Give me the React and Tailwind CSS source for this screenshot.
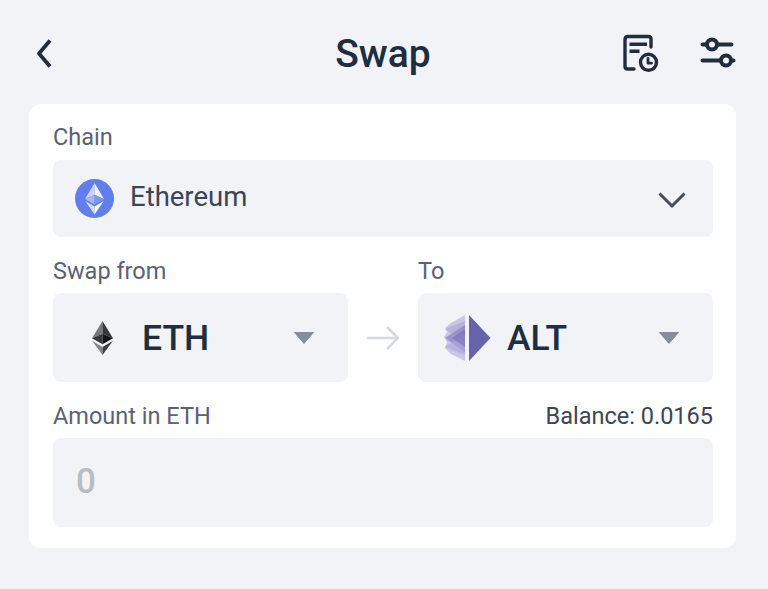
function BackIcon() {
  return (
    <svg className="h-8 w-5" viewBox="0 0 20 32" fill="none" stroke="#202d3f" strokeWidth="3.8">
      <path d="M16 3.500 L5 16.500 L16 29.500" strokeLinejoin="round" />
    </svg>
  );
}

function HistoryIcon() {
  return (
    <svg className="h-10 w-10" viewBox="0 0 40 40" fill="none" stroke="#202d3f" strokeWidth="3.4" strokeLinecap="round" strokeLinejoin="round">
      <path d="M31 14V6Q31 3.500 28.500 3.500H8Q5 3.500 5 6.500V33.500Q5 36 8 36H14" />
      <path d="M9.500 11.300H27M9.500 18.300H19.500" strokeLinecap="butt" />
      <circle cx="28.500" cy="29.300" r="8" />
      <path d="M28 25.500V30.200H31.500" strokeWidth="2.800" />
    </svg>
  );
}

function SettingsIcon() {
  return (
    <svg className="h-8 w-9" viewBox="0 0 36 32" fill="none" stroke="#202d3f" strokeWidth="4">
      <path d="M2.500 7.500H7M17.500 7.500H31.500M2.500 23.500H20M31 23.500H33.500" strokeLinecap="round" />
      <circle cx="12" cy="7.500" r="5" />
      <circle cx="26" cy="23.500" r="5" />
    </svg>
  );
}

function EthereumBadge() {
  return (
    <svg className="size-10" viewBox="0 0 40 40">
      <circle cx="20.500" cy="19.500" r="19.500" fill="#627eea" />
      <path d="M20.500 4L11 20L20.500 15.700Z" fill="#c9d2f9" />
      <path d="M20.500 4L30 20L20.500 15.700Z" fill="#eef1fe" />
      <path d="M11 20L20.500 15.700V25.500Z" fill="#a6b5f4" />
      <path d="M30 20L20.500 15.700V25.500Z" fill="#8296ee" />
      <path d="M11.300 22L20.500 27.500V35.500Z" fill="#d5dcfb" />
      <path d="M29.700 22L20.500 27.500V35.500Z" fill="#f3f5fe" />
    </svg>
  );
}

function EthMark() {
  return (
    <svg className="h-[34px] w-[22px]" viewBox="0 0 22 34">
      <path d="M11.500 0L1 17.200L11.500 12.700Z" fill="#77777c" />
      <path d="M11.500 0L22 17.200L11.500 12.700Z" fill="#38383c" />
      <path d="M1 17.200L11.500 12.700V23.300Z" fill="#38383c" />
      <path d="M22 17.200L11.500 12.700V23.300Z" fill="#151518" />
      <path d="M1 19.700L11.500 26V34Z" fill="#858589" />
      <path d="M22 19.700L11.500 26V34Z" fill="#3e3e42" />
    </svg>
  );
}

function AltMark() {
  return (
    <svg className="h-12 w-12" viewBox="0 0 48 48">
      <path d="M22 1L8 9L2 14L4 18L1 23L4 28L2 34L8 40L22 47Z" fill="#c8c7e5" />
      <path d="M22 7L2 15L22 28Z" fill="#aaa8d6" fillOpacity=".65" />
      <path d="M22 11L2 24L22 38Z" fill="#8986c4" fillOpacity=".75" />
      <path d="M22 20L2 33L22 41Z" fill="#aaa8d6" fillOpacity=".65" />
      <path d="M22 15L9 24L22 33Z" fill="#7571b7" fillOpacity=".6" />
      <path d="M26 1L47.500 24L26 47Z" fill="#6662ab" />
    </svg>
  );
}

function Caret() {
  return (
    <svg className="h-3 w-5" viewBox="0 0 20 12" fill="#858d99">
      <path d="M0.500 0.500H19.500L10 11.500Z" stroke="#858d99" strokeLinejoin="round" />
    </svg>
  );
}

function TokenField({ label, symbol, icon }) {
  return (
    <div className="w-[295px]">
      <div className="h-[34px] text-[23.5px] leading-6 text-[#596273]">{label}</div>
      <button className="flex h-[89px] w-full items-center rounded-lg bg-[#f1f3f7] pr-[34px] pl-[25px]">
        <span className="flex w-12 justify-center">{icon}</span>
        <span className="ml-4 text-[35.5px] leading-10 font-medium text-[#202d3f]">{symbol}</span>
        <span className="ml-auto">
          <Caret />
        </span>
      </button>
    </div>
  );
}

export default function App() {
  return (
    <main className="h-[589px] w-[768px] overflow-hidden bg-[#f1f3f7] font-[Roboto,sans-serif]">
      <header className="grid h-[104px] grid-cols-[1fr_auto_1fr] items-center pt-[2px] pr-8 pl-[30px]">
        <button className="ml-1 justify-self-start" aria-label="Back">
          <BackIcon />
        </button>
        <h1 className="pt-[2px] text-[39px] leading-[44px] font-medium text-[#202d3f]">Swap</h1>
        <div className="flex items-center gap-10 justify-self-end">
          <HistoryIcon />
          <SettingsIcon />
        </div>
      </header>

      <section className="ml-[29px] h-[444px] w-[707px] rounded-xl bg-white pt-[21px] pr-[23px] pl-6">
        <div className="h-[35px] text-[23.5px] leading-6 text-[#596273]">Chain</div>
        <button className="flex h-[77px] w-full items-center rounded-lg bg-[#f1f3f7] pr-[27px] pl-[21px]">
          <EthereumBadge />
          <span className="mb-[3px] ml-4 text-[27.5px] leading-8 text-[#3b4557]">Ethereum</span>
          <svg className="mt-1 ml-auto h-5 w-7" viewBox="0 0 28 20" fill="none" stroke="#444d5c" strokeWidth="3">
            <path d="M1.500 2.500L14 15L26.500 2.500" strokeLinejoin="round" />
          </svg>
        </button>

        <div className="mt-[22px] flex items-end justify-between">
          <TokenField label="Swap from" symbol="ETH" icon={<EthMark />} />
          <svg className="mb-7 h-8 w-8" viewBox="0 0 32 32" fill="none" stroke="#d8d9de" strokeWidth="2.6">
            <path d="M0 16H30M20 5L31 16L20 27" />
          </svg>
          <TokenField label="To" symbol="ALT" icon={<AltMark />} />
        </div>

        <div className="mt-[22px] flex h-[34px] justify-between text-[23.5px] leading-6">
          <span className="text-[#596273]">Amount in ETH</span>
          <span className="text-[#3b4557]">Balance: 0.0165</span>
        </div>
        <div className="flex h-[89px] items-center rounded-lg bg-[#f1f3f7] pl-[23px] text-[35px] font-medium text-[#b9bcc1]">0</div>
      </section>
    </main>
  );
}
